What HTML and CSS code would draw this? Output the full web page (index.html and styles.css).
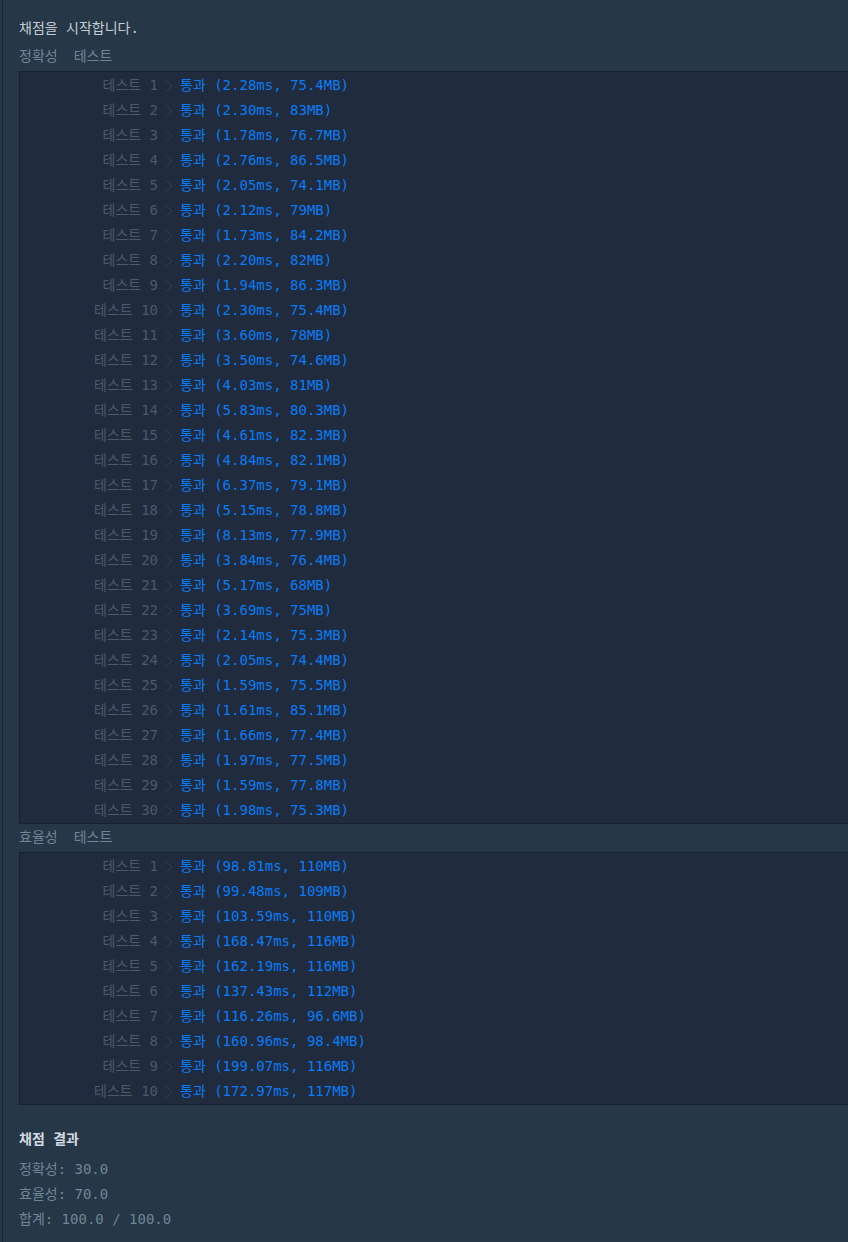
FILE: index.html
```html
<!DOCTYPE html>
<html lang="ko">
<head>
  <meta charset="UTF-8">
  <title>채점 결과</title>
  <link rel="stylesheet" href="styles.css">
</head>
<body>
  <main class="console">
    <p class="console-title">채점을 시작합니다.</p>

    <div class="section-label"><span>정확성</span><span>테스트</span></div>
    <div class="test-box" id="accuracy"></div>

    <div class="section-label"><span>효율성</span><span>테스트</span></div>
    <div class="test-box" id="efficiency"></div>

    <section class="summary">
      <h2 class="summary-title">채점 결과</h2>
      <p>정확성: 30.0</p>
      <p>효율성: 70.0</p>
      <p>합계: 100.0 / 100.0</p>
    </section>
  </main>
  <script src="script.js"></script>
</body>
</html>
```

FILE: styles.css
```css
html, body {
  margin: 0;
  min-height: 100vh;
  background: #263747;
}

.console {
  margin-left: 2px;
  border-left: 1px solid #1a2433;
  padding: 16px 0 12px 16px;
  min-height: calc(100vh - 28px);
  font-family: "DejaVu Sans Mono", "Noto Sans CJK KR", monospace;
  font-size: 14px;
  line-height: 25px;
  color: #6f8696;
}

.console-title {
  margin: 0;
  color: #c4ccd4;
}

.section-label {
  padding: 3px 0 2px;
  display: flex;
  gap: 16px;
  color: #6f8696;
}
.test-box + .section-label {
  padding: 1px 0 2px;
}

.test-box {
  background: #202b3d;
  border: 1px solid #18212f;
  border-right: none;
  padding-top: 1px;
}

.test-row {
  display: flex;
  align-items: center;
  height: 25px;
  white-space: pre;
}
.test-name {
  width: 138px;
  text-align: right;
  color: #4a5a6b;
}
.chevron {
  display: block;
  width: 8px;
  height: 14px;
  margin: 0 7px 0 7px;
}
.chevron polyline {
  fill: none;
  stroke: #334252;
  stroke-width: 1;
}
.test-result {
  color: #0a7cf7;
}

.summary {
  margin-top: 22px;
}
.summary-title {
  margin: 0 0 5px;
  font-size: 14px;
  font-weight: bold;
  color: #d3dae0;
}
.summary p {
  margin: 0;
  color: #6f8696;
}
```

FILE: script.js
```js
const accuracy = [
  ['2.28', '75.4'], ['2.30', '83'], ['1.78', '76.7'], ['2.76', '86.5'], ['2.05', '74.1'],
  ['2.12', '79'], ['1.73', '84.2'], ['2.20', '82'], ['1.94', '86.3'], ['2.30', '75.4'],
  ['3.60', '78'], ['3.50', '74.6'], ['4.03', '81'], ['5.83', '80.3'], ['4.61', '82.3'],
  ['4.84', '82.1'], ['6.37', '79.1'], ['5.15', '78.8'], ['8.13', '77.9'], ['3.84', '76.4'],
  ['5.17', '68'], ['3.69', '75'], ['2.14', '75.3'], ['2.05', '74.4'], ['1.59', '75.5'],
  ['1.61', '85.1'], ['1.66', '77.4'], ['1.97', '77.5'], ['1.59', '77.8'], ['1.98', '75.3']
];

const efficiency = [
  ['98.81', '110'], ['99.48', '109'], ['103.59', '110'], ['168.47', '116'], ['162.19', '116'],
  ['137.43', '112'], ['116.26', '96.6'], ['160.96', '98.4'], ['199.07', '116'], ['172.97', '117']
];

function fillBox(id, rows) {
  const box = document.getElementById(id);
  rows.forEach(function (r, i) {
    const row = document.createElement('div');
    row.className = 'test-row';
    row.innerHTML =
      '<span class="test-name">테스트 ' + (i + 1) + '</span>' +
      '<svg class="chevron" viewBox="0 0 8 14"><polyline points="1.5,1.5 6.5,7 1.5,12.5"/></svg>' +
      '<span class="test-result">통과 (' + r[0] + 'ms, ' + r[1] + 'MB)</span>';
    box.appendChild(row);
  });
}

fillBox('accuracy', accuracy);
fillBox('efficiency', efficiency);
```
